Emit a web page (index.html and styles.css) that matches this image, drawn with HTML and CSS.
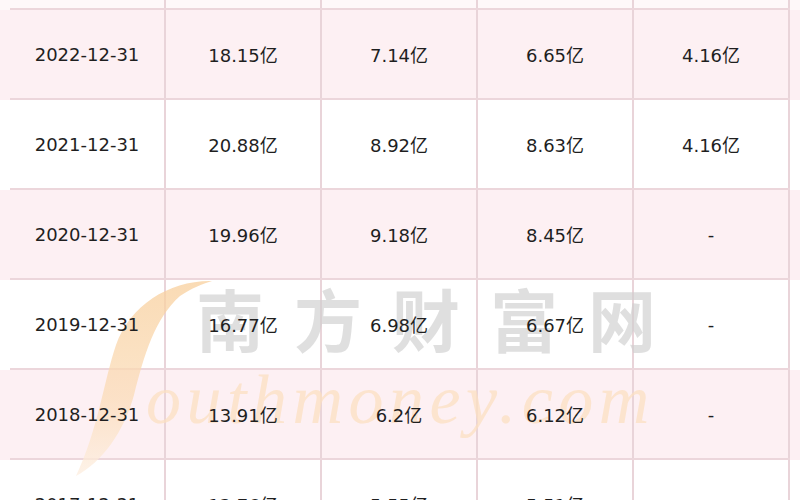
FILE: index.html
```html
<!DOCTYPE html>
<html lang="zh-CN">
<head>
<meta charset="utf-8">
<title>财务数据</title>
<link rel="stylesheet" href="styles.css">
</head>
<body>
<div class="page">
  <div class="row row-white row-top">
    <div class="grid"><div class="cell"></div><div class="cell"></div><div class="cell"></div><div class="cell"></div><div class="cell"></div></div>
  </div>
  <div class="row row-pink">
    <div class="grid"><div class="cell"><span>2022-12-31</span></div><div class="cell"><span>18.15亿</span></div><div class="cell"><span>7.14亿</span></div><div class="cell"><span>6.65亿</span></div><div class="cell"><span>4.16亿</span></div></div>
  </div>
  <div class="row row-white">
    <div class="grid"><div class="cell"><span>2021-12-31</span></div><div class="cell"><span>20.88亿</span></div><div class="cell"><span>8.92亿</span></div><div class="cell"><span>8.63亿</span></div><div class="cell"><span>4.16亿</span></div></div>
  </div>
  <div class="row row-pink">
    <div class="grid"><div class="cell"><span>2020-12-31</span></div><div class="cell"><span>19.96亿</span></div><div class="cell"><span>9.18亿</span></div><div class="cell"><span>8.45亿</span></div><div class="cell"><span>-</span></div></div>
  </div>
  <div class="row row-white">
    <div class="grid"><div class="cell"><span>2019-12-31</span></div><div class="cell"><span>16.77亿</span></div><div class="cell"><span>6.98亿</span></div><div class="cell"><span>6.67亿</span></div><div class="cell"><span>-</span></div></div>
  </div>
  <div class="row row-pink">
    <div class="grid"><div class="cell"><span>2018-12-31</span></div><div class="cell"><span>13.91亿</span></div><div class="cell"><span>6.2亿</span></div><div class="cell"><span>6.12亿</span></div><div class="cell"><span>-</span></div></div>
  </div>
  <div class="row row-white">
    <div class="grid"><div class="cell"><span>2017-12-31</span></div><div class="cell"><span>12.76亿</span></div><div class="cell"><span>5.55亿</span></div><div class="cell"><span>5.51亿</span></div><div class="cell"><span>-</span></div></div>
  </div>

  <svg class="watermark" viewBox="0 0 800 500" width="800" height="500" aria-hidden="true">
    <defs>
      <linearGradient id="sgrad" x1="0" y1="0" x2="0" y2="1">
        <stop offset="0" stop-color="#f8cf9c"/>
        <stop offset="0.6" stop-color="#fbdcb8"/>
        <stop offset="1" stop-color="#fdeee0"/>
      </linearGradient>
    </defs>
    <path class="s-mark" d="M 212 281 C 170 280, 130 305, 116 345 C 104 380, 98 430, 76 476 C 102 462, 124 432, 134 395 C 144 355, 155 318, 180 296 C 192 288, 202 284, 212 281 Z" fill="url(#sgrad)"/>
    <text class="wm-cn" x="196" y="347">南方财富网</text>
    <text class="wm-en" x="146" y="423">outhmoney.com</text>
  </svg>
</div>
</body>
</html>
```

FILE: styles.css
```css
html, body {
  margin: 0;
  padding: 0;
  background: #ffffff;
}

.page {
  position: relative;
  width: 800px;
  height: 500px;
  overflow: hidden;
  font-family: "DejaVu Sans", "Noto Sans CJK SC", sans-serif;
  font-size: 18px;
  color: #1f1f1f;
}

.row-pink {
  background: #fdf0f3;
}

.row-white {
  background: #ffffff;
}

.row-top {
  background: #fef8f9;
}

.grid {
  margin-left: 10px;
  width: 780px;
  display: grid;
  grid-template-columns: repeat(5, 1fr);
  border-bottom: 2px solid #ecd6db;
}

.cell {
  height: 88px;
  border-right: 2px solid #e9d4d9;
  display: flex;
  align-items: center;
  justify-content: center;
}

.row-top .cell {
  height: 8px;
}

.cell span {
  position: relative;
  z-index: 2;
  white-space: nowrap;
}

.watermark {
  position: absolute;
  left: 0;
  top: 0;
  z-index: 1;
  pointer-events: none;
}

.s-mark {
  opacity: 0.75;
}

.wm-cn {
  font-family: "Noto Sans CJK SC", sans-serif;
  font-weight: 700;
  font-size: 68px;
  letter-spacing: 30px;
  fill: #cfcfcf;
  opacity: 0.65;
}

.wm-en {
  font-family: "Liberation Serif", serif;
  font-style: italic;
  font-size: 70px;
  letter-spacing: 5.5px;
  fill: #fce0c2;
  opacity: 0.75;
}
```
